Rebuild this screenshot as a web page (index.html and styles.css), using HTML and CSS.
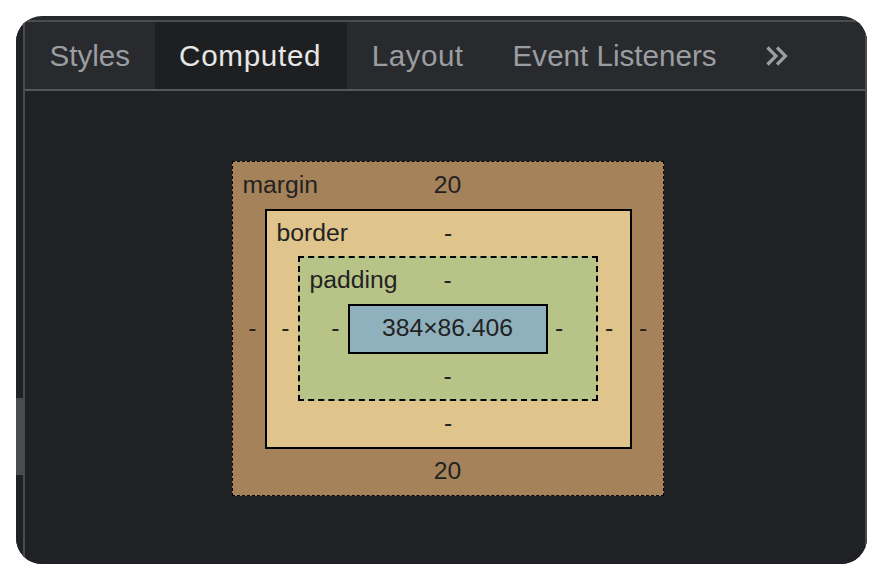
FILE: index.html
```html
<!DOCTYPE html>
<html>
<head>
<meta charset="utf-8">
<link rel="stylesheet" href="styles.css">
</head>
<body>
<div class="frame">
  <div class="gutter"><div class="thumb"></div></div>
  <div class="main">
    <div class="tabs">
      <div class="tab">Styles</div>
      <div class="tab active tab-computed">Computed</div>
      <div class="tab tab-layout">Layout</div>
      <div class="tab">Event Listeners</div>
      <div class="tab more">
        <svg width="26" height="22" viewBox="0 0 26 22" fill="none" stroke="currentColor" stroke-width="3.2" stroke-linejoin="miter">
          <polyline points="3.5,2.5 12,11 3.5,19.5"/>
          <polyline points="13,2.5 21.5,11 13,19.5"/>
        </svg>
      </div>
    </div>
    <div class="pane">
      <div class="mbox">
        <div class="row row-top mtop"><span class="label">margin</span><span class="val">20</span></div>
        <div class="row-mid">
          <span class="side side-l mside-l">-</span>
          <div class="bbox">
            <div class="row row-top btop"><span class="label">border</span><span class="val">-</span></div>
            <div class="row-mid">
              <span class="side side-l bside-l">-</span>
              <div class="pbox">
                <div class="row row-top ptop"><span class="label">padding</span><span class="val">-</span></div>
                <div class="row-mid">
                  <span class="side side-l pside">-</span>
                  <div class="cbox">384×86.406</div>
                  <span class="side side-r pside">-</span>
                </div>
                <div class="row row-bottom pbottom"><span class="val">-</span></div>
              </div>
              <span class="side side-r bside-r">-</span>
            </div>
            <div class="row row-bottom bbottom"><span class="val">-</span></div>
          </div>
          <span class="side side-r mside-r">-</span>
        </div>
        <div class="row row-bottom mbottom"><span class="val">20</span></div>
      </div>
    </div>
  </div>
</div>
</body>
</html>
```

FILE: styles.css
```css
html, body {
  margin: 0;
  padding: 0;
  background: #ffffff;
}

.frame {
  margin: 16px 0 0 16px;
  width: 851px;
  height: 548px;
  box-sizing: border-box;
  padding-top: 4px;
  border-radius: 26px;
  overflow: hidden;
  background: #27282b;
  display: flex;
}

.gutter {
  width: 7px;
  flex: none;
  display: flex;
  flex-direction: column;
  background: #202124;
}

.thumb {
  margin-top: 378px;
  height: 77px;
  background: #4a4b4d;
}

.main {
  flex: 1;
  display: flex;
  flex-direction: column;
  border-top: 2px solid #4a4b4e;
  border-left: 2px solid #4a4b4e;
  border-right: 2px solid #4a4b4e;
  background: #202124;
  font-family: "Liberation Sans", Arial, sans-serif;
}

.tabs {
  height: 67px;
  flex: none;
  display: flex;
  background: #292a2d;
  border-bottom: 2px solid #56575a;
}

.tab {
  display: flex;
  align-items: center;
  padding: 0 24.5px;
  font-size: 29.6px;
  color: #9a9da1;
}

.tab.active {
  background: #1e1f21;
  color: #e6e6e6;
}

.tab-computed {
  letter-spacing: 0.7px;
  padding-right: 26px;
}

.tab-layout {
  letter-spacing: 0.5px;
}

.tab.more {
  padding: 1px 24px 0 23px;
  color: #9a9da1;
}

.pane {
  flex: 1;
  display: flex;
  justify-content: center;
  align-items: center;
  padding-left: 5px;
  padding-top: 1px;
}

.mbox, .bbox, .pbox, .cbox {
  box-sizing: border-box;
  color: #222222;
  font-size: 24.7px;
  line-height: 1;
}

.mbox {
  border: 1px dashed #000;
  background: #a6825b;
}

.bbox {
  border: 2px solid #000;
  background: #dfc48c;
}

.pbox {
  border: 2px dashed #000;
  background: #b8c487;
}

.cbox {
  width: 200px;
  height: 50px;
  border: 2px solid #000;
  background: #8fb0bd;
  display: flex;
  align-items: center;
  justify-content: center;
}

.row {
  display: grid;
  grid-template-columns: 1fr auto 1fr;
  align-items: center;
}

.row-bottom {
  grid-template-columns: 1fr;
  justify-items: center;
}

.row-top .val {
  grid-column: 2;
}

.label {
  grid-column: 1;
  justify-self: start;
  padding-left: 10px;
}

.row-mid {
  display: flex;
  align-items: center;
}

.side {
  display: flex;
  flex: none;
  box-sizing: border-box;
}

.side-l {
  justify-content: flex-end;
  padding-right: 8px;
}

.side-r {
  justify-content: flex-start;
  padding-left: 7.5px;
}

.mside-l { width: 32px; }
.mside-r { width: 31px; }
.bside-l { width: 31px; }
.bside-r { width: 32px; }
.pside { width: 48px; }

.mtop { height: 47px; }
.mbottom { height: 46px; }
.btop { height: 45px; }
.bbottom { height: 46px; }
.ptop { height: 46px; }
.pbottom { height: 45px; }
```
